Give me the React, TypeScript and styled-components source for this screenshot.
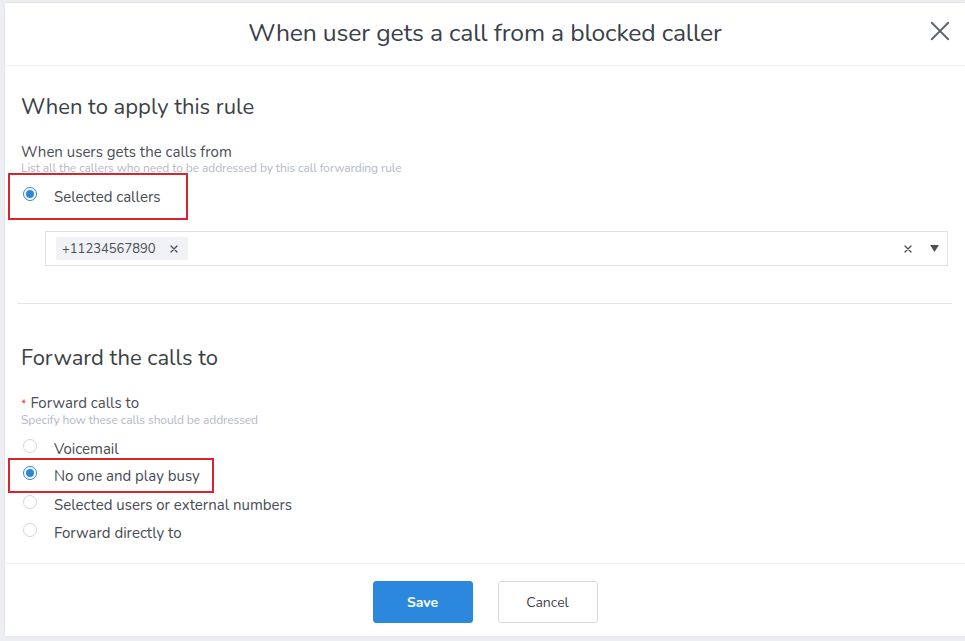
import * as React from 'react';
import styled, { createGlobalStyle } from 'styled-components';

const GlobalStyle = createGlobalStyle`
  html, body {
    margin: 0;
    padding: 0;
    background: #eceef2;
    font-family: "Nunito", "Open Sans", "Noto Sans", sans-serif;
  }
`;

const Backdrop = styled.div`
  height: 641px;
  box-sizing: border-box;
  padding: 3px 0 5px 5px;
  display: flex;
`;

const Modal = styled.div`
  flex: 1;
  background: #fff;
  display: flex;
  flex-direction: column;
  box-shadow: 0 0 4px rgba(0, 0, 0, 0.06);
`;

const Header = styled.div`
  height: 63px;
  box-sizing: border-box;
  padding-bottom: 2px;
  flex-shrink: 0;
  border-bottom: 1px solid #eef0f3;
  display: flex;
  align-items: center;
  justify-content: center;
  position: relative;
`;

const Title = styled.h1`
  margin: 0;
  font-size: 24.7px;
  font-weight: 400;
  color: #3a4049;
  letter-spacing: -0.15px;
`;

const CloseButton = styled.button`
  position: absolute;
  right: 13px;
  top: 16px;
  width: 24px;
  height: 24px;
  padding: 0;
  border: none;
  background: none;
  cursor: pointer;
  display: flex;
  align-items: center;
  justify-content: center;
`;

const Body = styled.div`
  flex: 1;
  padding: 26px 17px 0 16px;
`;

const SectionTitle = styled.h2`
  margin: 0 0 21px;
  font-size: 22px;
  font-weight: 400;
  color: #3b3f45;
`;

const Label = styled.div`
  font-size: 15px;
  color: #4a4e55;
  line-height: 18px;
`;

const Required = styled.span`
  color: #e0414b;
  margin-right: 4px;
  font-size: 12px;
`;

const Hint = styled.div`
  font-size: 12px;
  color: #b3b9c3;
  line-height: 14px;
  letter-spacing: -0.1px;
`;

/* red outline around the chosen option; margins keep the row pitch at 28px */
const Highlight = styled.div<{ $width: number; $height: number; $top: number; $bottom?: number }>`
  width: ${ p => p.$width }px;
  height: ${ p => p.$height }px;
  box-sizing: border-box;
  border: 2px solid #d9232e;
  margin: ${ p => p.$top }px 0 ${ p => p.$bottom ?? 28 - p.$height - p.$top }px -13px;
  display: flex;
  align-items: center;
  padding-left: 11px;
`;

const RadioGroup = styled.div`
  margin-top: 8px;
`;

const RadioRow = styled.label`
  display: flex;
  align-items: center;
  height: 28px;
  padding-left: 2px;
  font-size: 15px;
  color: #464b52;
  cursor: pointer;
`;

const RadioCircle = styled.span<{ $checked?: boolean }>`
  width: 14px;
  height: 14px;
  box-sizing: border-box;
  border-radius: 50%;
  border: 1px solid ${ p => p.$checked ? '#2b88d8' : '#d4d7dc' };
  margin-right: 17px;
  display: flex;
  align-items: center;
  justify-content: center;
  position: relative;
  top: -3px;

  &::after {
    content: '';
    display: ${ p => p.$checked ? 'block' : 'none' };
    width: 8px;
    height: 8px;
    border-radius: 50%;
    background: #2b88d8;
  }
`;

const SelectBox = styled.div`
  margin-left: 24px;
  height: 35px;
  box-sizing: border-box;
  border: 1px solid #dcdfe4;
  display: flex;
  align-items: center;
  padding: 0 8px 0 10px;
`;

const Tag = styled.span`
  background: #f0f2f5;
  height: 23px;
  border-radius: 2px;
  padding: 0 10px 0 6px;
  display: flex;
  align-items: center;
  gap: 14px;
  font-size: 13px;
  color: #4a4e55;
`;

const SelectControls = styled.div`
  margin-left: auto;
  display: flex;
  align-items: center;
  gap: 18px;
`;

const Divider = styled.hr`
  border: none;
  border-top: 1px solid #e3e5e9;
  margin: 37px -4px 39px -4px;
`;

const Footer = styled.div`
  height: 73px;
  flex-shrink: 0;
  border-top: 1px solid #eef0f3;
  display: flex;
  align-items: flex-start;
  justify-content: center;
  padding-top: 17px;
  gap: 25px;
  box-sizing: border-box;
`;

const Button = styled.button<{ $primary?: boolean }>`
  width: 100px;
  height: 42px;
  border-radius: 3px;
  font-family: inherit;
  font-size: 14px;
  cursor: pointer;
  border: 1px solid ${ p => p.$primary ? '#2b88dd' : '#d6d9de' };
  background: ${ p => p.$primary ? '#2b88dd' : '#fff' };
  color: ${ p => p.$primary ? '#fff' : '#3f444b' };
  font-weight: ${ p => p.$primary ? 700 : 400 };
`;

const Cross = ( { size, color, stroke }: { size: number; color: string; stroke: number } ) => (
    <svg width={ size } height={ size } viewBox="0 0 24 24">
        <path d="M3 3 L21 21 M21 3 L3 21" stroke={ color } strokeWidth={ stroke } strokeLinecap="round"/>
    </svg>
);

const Radio: React.FC<{ checked?: boolean; children: React.ReactNode }> = ( { checked, children } ) => (
    <RadioRow>
        <RadioCircle $checked={ checked }/>
        { children }
    </RadioRow>
);

export default function App()
{
    return (
        <>
            <GlobalStyle/>
            <Backdrop>
                <Modal>
                    <Header>
                        <Title>When user gets a call from a blocked caller</Title>
                        <CloseButton aria-label="Close">
                            <Cross size={ 22 } color="#5d636b" stroke={ 2 }/>
                        </CloseButton>
                    </Header>
                    <Body>
                        <SectionTitle>When to apply this rule</SectionTitle>
                        <Label>When users gets the calls from</Label>
                        <Hint>List all the callers who need to be addressed by this call forwarding rule</Hint>
                        <Highlight $width={ 180 } $height={ 47 } $top={ -2 } $bottom={ 11 }>
                            <Radio checked>Selected callers</Radio>
                        </Highlight>
                        <SelectBox>
                            <Tag>
                                +11234567890
                                <Cross size={ 8 } color="#4a4e55" stroke={ 4 }/>
                            </Tag>
                            <SelectControls>
                                <Cross size={ 8 } color="#4a4e55" stroke={ 4 }/>
                                <svg width="9" height="7" viewBox="0 0 10 8">
                                    <path d="M0 0 H10 L5 8 Z" fill="#4a4e55"/>
                                </svg>
                            </SelectControls>
                        </SelectBox>
                        <Divider/>
                        <SectionTitle>Forward the calls to</SectionTitle>
                        <Label><Required>*</Required>Forward calls to</Label>
                        <Hint>Specify how these calls should be addressed</Hint>
                        <RadioGroup>
                            <Radio>Voicemail</Radio>
                            <Highlight $width={ 206 } $height={ 35 } $top={ -5 }>
                                <Radio checked>No one and play busy</Radio>
                            </Highlight>
                            <Radio>Selected users or external numbers</Radio>
                            <Radio>Forward directly to</Radio>
                        </RadioGroup>
                    </Body>
                    <Footer>
                        <Button $primary>Save</Button>
                        <Button>Cancel</Button>
                    </Footer>
                </Modal>
            </Backdrop>
        </>
    );
}
